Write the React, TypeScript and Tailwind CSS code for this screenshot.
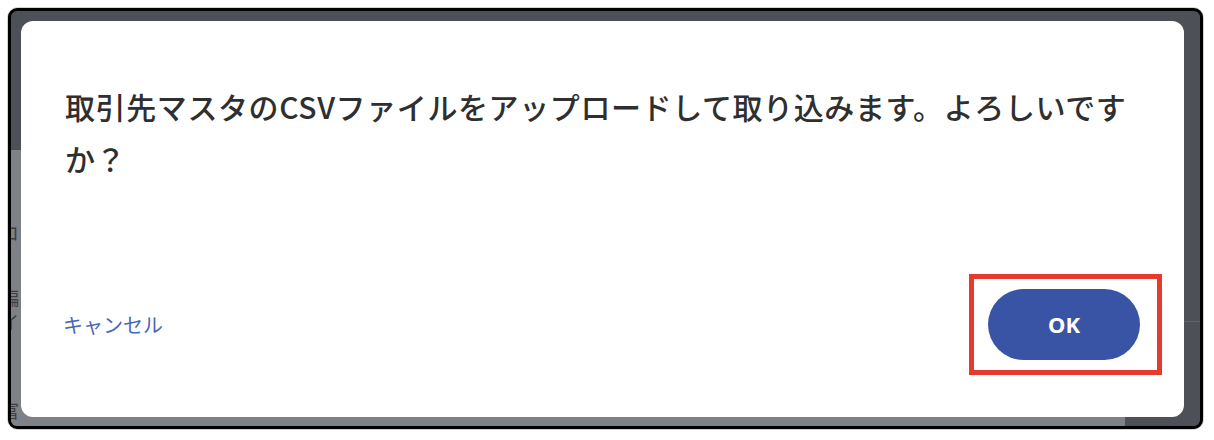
export default function App() {
  return (
    <div className="w-[1214px] h-[440px] bg-white pt-[7px] pl-[7px] font-['Noto_Sans_CJK_JP','Noto_Sans',sans-serif]">
      <div className="w-[1197px] h-[423px] rounded-[11px] border border-[#d2d2d2]">
        <div className="relative w-full h-full rounded-[9px] border-[3px] border-black bg-[#4d5157] overflow-hidden">
          {/* page behind the overlay */}
          <div className="absolute left-0 top-[139px] bottom-0 w-[1114px] bg-[#7e8186] flex flex-col items-start text-[18px] leading-none text-[#3c3f44]">
            <span className="-ml-[10px] mt-[73px]">コ</span>
            <span className="-ml-[10px] mt-[47px]">編</span>
            <span className="-ml-[10px] mt-[6px]">イ</span>
            <span className="-ml-[10px] mt-[71px]">富</span>
          </div>
          <div className="absolute right-0 top-[310px] w-[16px] h-px bg-[#5f6368]" />

          {/* dialog */}
          <div className="relative pl-[10px] pt-[10px]">
            <div className="w-[1163px] h-[396px] bg-white rounded-[12px] flex flex-col px-[44px] pt-[59px] pb-[57px]">
              <p className="max-w-[1075px] text-[30px] leading-[52px] tracking-[0.6px] font-medium text-[#2f2f2f]">
                取引先マスタのCSVファイルをアップロードして取り込みます。よろしいですか？
              </p>

              <div className="mt-auto flex items-center justify-between">
                <button className="-ml-[2px] text-[20px] leading-none text-[#4766b9]">キャンセル</button>
                <div className="relative">
                  <button className="w-[152px] h-[71px] rounded-full bg-[#3954a5] text-white text-[22px] font-bold font-['Noto_Sans',sans-serif]">
                    OK
                  </button>
                  {/* highlight annotation */}
                  <div className="absolute -left-[19px] -right-[22px] -top-[15px] -bottom-[15px] border-[5px] border-[#e63a2d]" />
                </div>
              </div>
            </div>
          </div>
        </div>
      </div>
    </div>
  );
}
